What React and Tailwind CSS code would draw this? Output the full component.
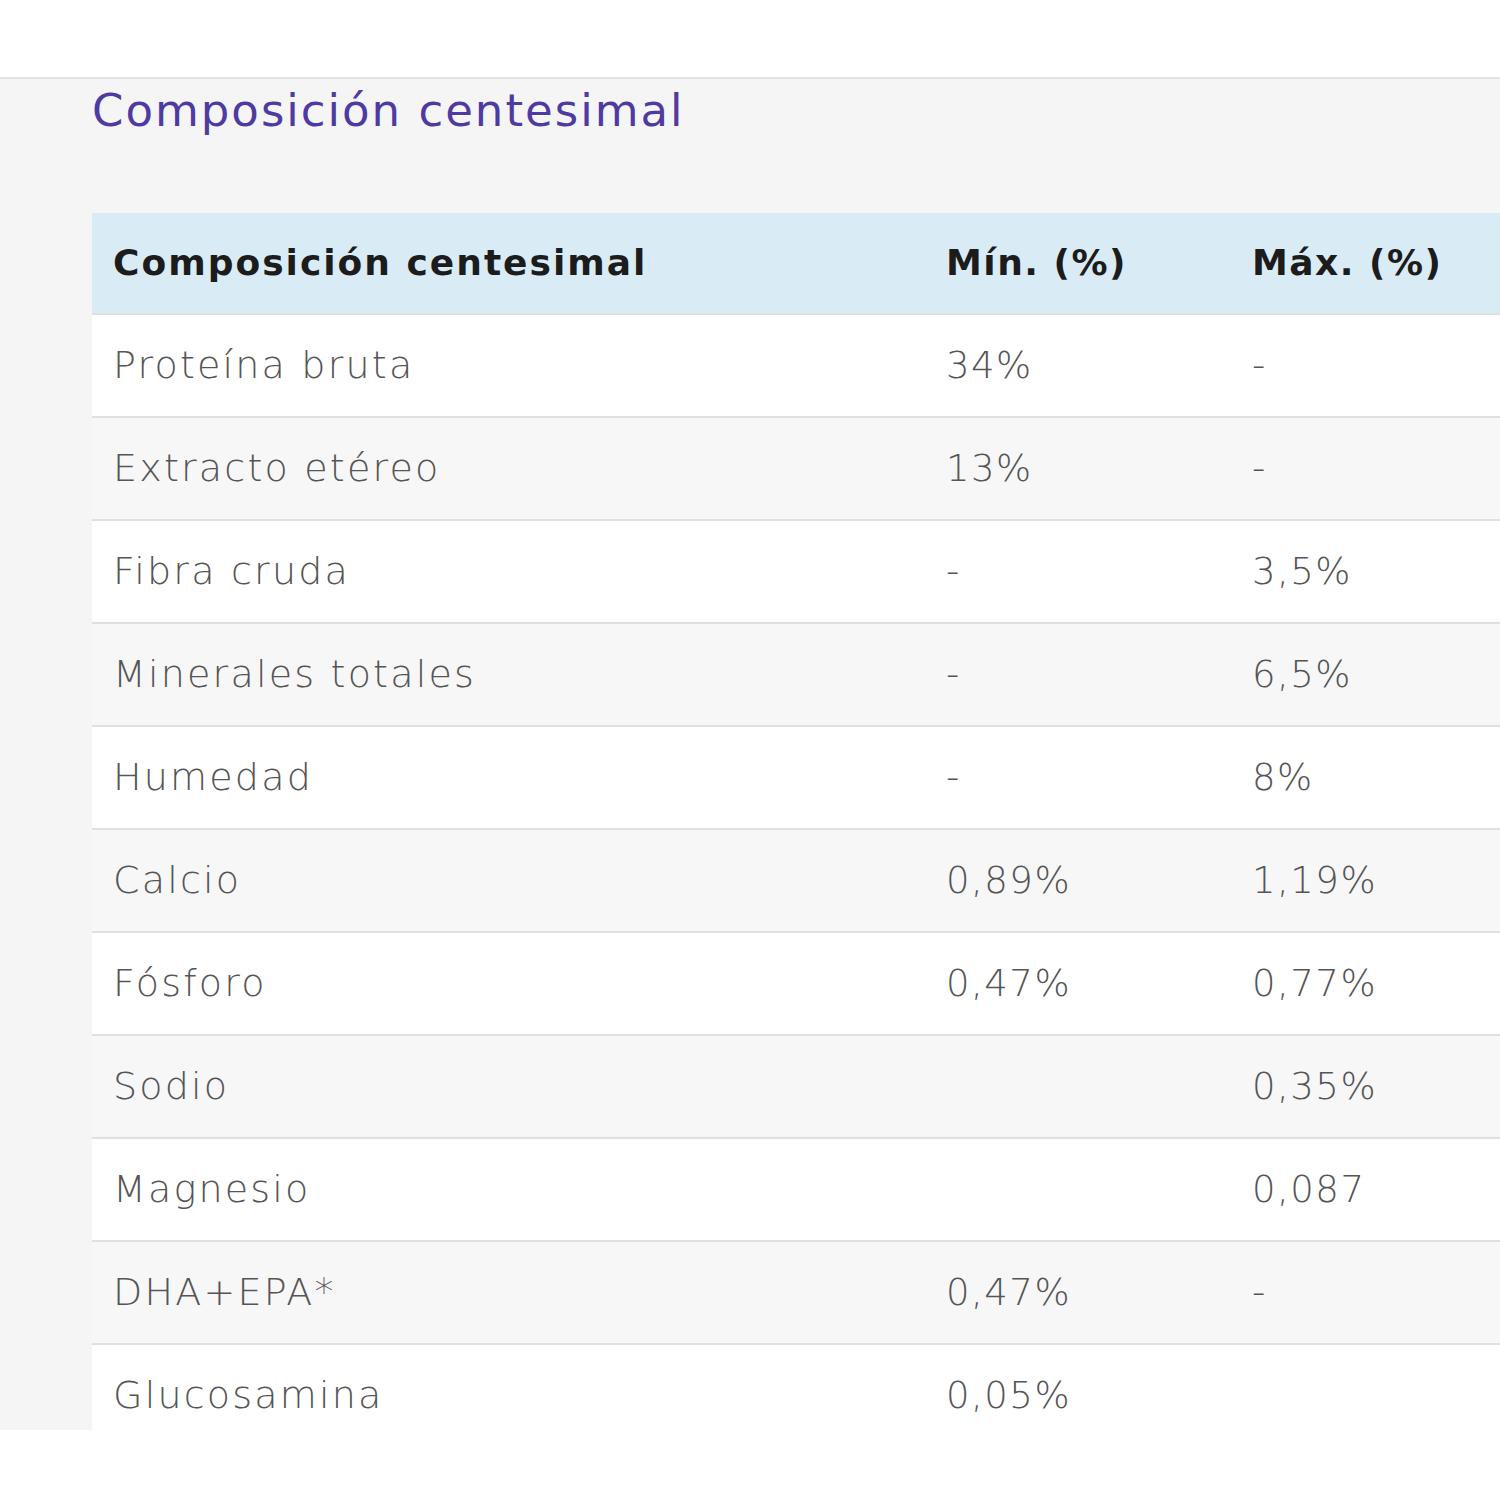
const rows = [
  ['Proteína bruta', '34%', '-'],
  ['Extracto etéreo', '13%', '-'],
  ['Fibra cruda', '-', '3,5%'],
  ['Minerales totales', '-', '6,5%'],
  ['Humedad', '-', '8%'],
  ['Calcio', '0,89%', '1,19%'],
  ['Fósforo', '0,47%', '0,77%'],
  ['Sodio', '', '0,35%'],
  ['Magnesio', '', '0,087'],
  ['DHA+EPA*', '0,47%', '-'],
  ['Glucosamina', '0,05%', ''],
]

export default function App() {
  return (
    <div className="w-[1500px] h-[1500px] bg-white overflow-hidden" style={{ fontFamily: '"DejaVu Sans", sans-serif' }}>
      <div className="h-[79px] border-b-2 border-[#e2e2e2]" />
      <div className="h-[1351px] bg-[#f5f5f5] overflow-hidden pl-[92px]">
        <h2 className="pt-[4px] text-[45px] leading-[56px] text-[#4f3aa2] tracking-[2px]">Composición centesimal</h2>
        <table className="mt-[74px] w-[1440px] border-collapse">
          <thead>
            <tr className="bg-[#d9ecf6] h-[101px] border-b-2 border-[#e0e0e0]">
              <th className="w-[833px] text-left pl-[21px] text-[36px] font-bold text-[#1c1c1c] tracking-[2px]">Composición centesimal</th>
              <th className="w-[306px] text-left pl-[21px] text-[36px] font-bold text-[#1c1c1c] tracking-[1.5px]">Mín. (%)</th>
              <th className="text-left pl-[21px] text-[36px] font-bold text-[#1c1c1c] tracking-[1.5px]">Máx. (%)</th>
            </tr>
          </thead>
          <tbody>
            {rows.map((r, i) => (
              <tr key={i} className={`h-[103px] border-b-2 border-[#e0e0e0] ${i % 2 === 0 ? 'bg-white' : 'bg-[#f7f7f7]'}`}>
                {r.map((c, j) => (
                  <td key={j} className={`pl-[21px] font-light text-[#555] ${j === 0 ? 'text-[38px] tracking-[2.2px]' : 'text-[37px] tracking-[1.5px]'}`}>{c}</td>
                ))}
              </tr>
            ))}
          </tbody>
        </table>
      </div>
    </div>
  )
}
